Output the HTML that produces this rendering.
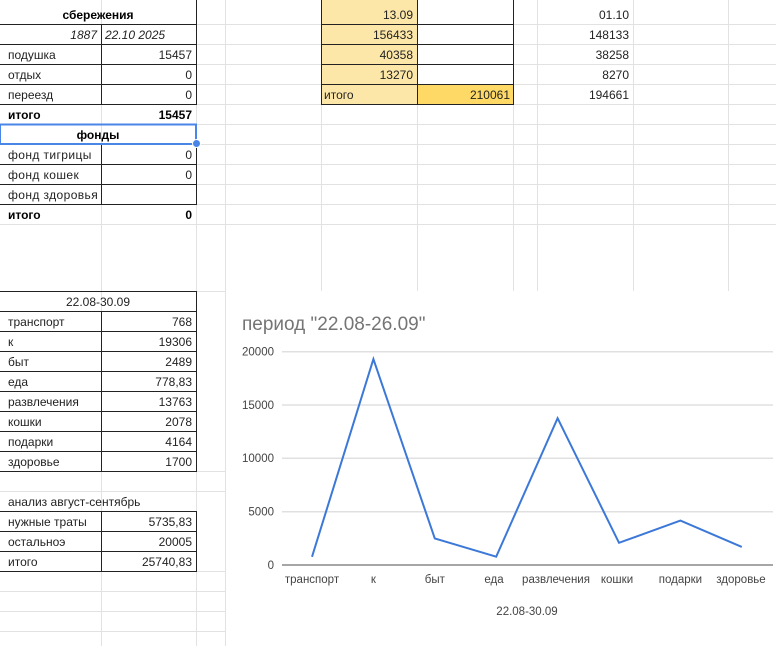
<!DOCTYPE html>
<html><head><meta charset="utf-8"><style>
html,body{margin:0;padding:0;background:#fff;width:776px;height:646px;overflow:hidden}
svg{display:block}
text{font-family:"Liberation Sans",Arial,sans-serif;font-size:12px;fill:#222}
.b{font-weight:bold;fill:#000}
.r{text-anchor:end}
.c{text-anchor:middle}
.g{stroke:#e2e2e2;stroke-width:1}
.k{stroke:#222;stroke-width:1}
.ax{font-size:11.5px;fill:#444}
</style></head><body>
<svg width="776" height="646" viewBox="0 0 776 646" xmlns="http://www.w3.org/2000/svg">
<!-- yellow fills -->
<rect x="321" y="0" width="96" height="104" fill="#fde7a8"/>
<rect x="417" y="84" width="96" height="20" fill="#ffd966"/>
<!-- light grid: verticals -->
<g class="g">
<line x1="101.5" y1="0" x2="101.5" y2="646"/>
<line x1="196.5" y1="0" x2="196.5" y2="646"/>
<line x1="225.5" y1="0" x2="225.5" y2="646"/>
<line x1="321.5" y1="0" x2="321.5" y2="291"/>
<line x1="417.5" y1="0" x2="417.5" y2="291"/>
<line x1="513.5" y1="0" x2="513.5" y2="291"/>
<line x1="537.5" y1="0" x2="537.5" y2="291"/>
<line x1="633.5" y1="0" x2="633.5" y2="291"/>
<line x1="728.5" y1="0" x2="728.5" y2="291"/>
<line x1="0" y1="24.5" x2="776" y2="24.5"/>
<line x1="0" y1="44.5" x2="776" y2="44.5"/>
<line x1="0" y1="64.5" x2="776" y2="64.5"/>
<line x1="0" y1="84.5" x2="776" y2="84.5"/>
<line x1="0" y1="104.5" x2="776" y2="104.5"/>
<line x1="0" y1="124.5" x2="776" y2="124.5"/>
<line x1="0" y1="144.5" x2="776" y2="144.5"/>
<line x1="0" y1="164.5" x2="776" y2="164.5"/>
<line x1="0" y1="184.5" x2="776" y2="184.5"/>
<line x1="0" y1="204.5" x2="776" y2="204.5"/>
<line x1="0" y1="224.5" x2="776" y2="224.5"/>
<line x1="0" y1="291.5" x2="225" y2="291.5"/>
<line x1="0" y1="471.5" x2="225" y2="471.5"/>
<line x1="0" y1="491.5" x2="225" y2="491.5"/>
<line x1="0" y1="571.5" x2="225" y2="571.5"/>
<line x1="0" y1="591.5" x2="225" y2="591.5"/>
<line x1="0" y1="611.5" x2="225" y2="611.5"/>
<line x1="0" y1="631.5" x2="225" y2="631.5"/>
</g>
<!-- black borders -->
<g class="k">
<line x1="196.5" y1="0" x2="196.5" y2="104"/>
<line x1="101.5" y1="24" x2="101.5" y2="104"/>
<line x1="0" y1="24.5" x2="197" y2="24.5"/>
<line x1="0" y1="44.5" x2="197" y2="44.5"/>
<line x1="0" y1="64.5" x2="197" y2="64.5"/>
<line x1="0" y1="84.5" x2="197" y2="84.5"/>
<line x1="0" y1="104.5" x2="197" y2="104.5"/>
<line x1="0" y1="144.5" x2="197" y2="144.5"/>
<line x1="0" y1="164.5" x2="197" y2="164.5"/>
<line x1="0" y1="184.5" x2="197" y2="184.5"/>
<line x1="0" y1="204.5" x2="197" y2="204.5"/>
<line x1="101.5" y1="144" x2="101.5" y2="204"/>
<line x1="196.5" y1="144" x2="196.5" y2="204"/>
<!-- yellow table -->
<line x1="321.5" y1="0" x2="321.5" y2="104"/>
<line x1="417.5" y1="0" x2="417.5" y2="104"/>
<line x1="513.5" y1="0" x2="513.5" y2="104"/>
<line x1="321" y1="24.5" x2="514" y2="24.5"/>
<line x1="321" y1="44.5" x2="514" y2="44.5"/>
<line x1="321" y1="64.5" x2="514" y2="64.5"/>
<line x1="321" y1="84.5" x2="514" y2="84.5"/>
<line x1="321" y1="104.5" x2="514" y2="104.5"/>
<!-- lower table -->
<line x1="0" y1="291.5" x2="197" y2="291.5"/>
<line x1="0" y1="311.5" x2="197" y2="311.5"/>
<line x1="0" y1="331.5" x2="197" y2="331.5"/>
<line x1="0" y1="351.5" x2="197" y2="351.5"/>
<line x1="0" y1="371.5" x2="197" y2="371.5"/>
<line x1="0" y1="391.5" x2="197" y2="391.5"/>
<line x1="0" y1="411.5" x2="197" y2="411.5"/>
<line x1="0" y1="431.5" x2="197" y2="431.5"/>
<line x1="0" y1="451.5" x2="197" y2="451.5"/>
<line x1="0" y1="471.5" x2="197" y2="471.5"/>
<line x1="196.5" y1="291" x2="196.5" y2="471"/>
<line x1="101.5" y1="311" x2="101.5" y2="471"/>
<line x1="0" y1="511.5" x2="197" y2="511.5"/>
<line x1="0" y1="531.5" x2="197" y2="531.5"/>
<line x1="0" y1="551.5" x2="197" y2="551.5"/>
<line x1="0" y1="571.5" x2="197" y2="571.5"/>
<line x1="196.5" y1="511" x2="196.5" y2="571"/>
<line x1="101.5" y1="511" x2="101.5" y2="571"/>
</g>
<!-- selection -->
<rect x="0" y="124.5" width="196" height="19.5" fill="none" stroke="#4a86e8" stroke-width="2"/>
<circle cx="196.5" cy="143.5" r="4" fill="#4a86e8" stroke="#fff" stroke-width="1"/>

<!-- top-left text -->
<text x="98" y="19" class="b c">сбережения</text>
<text x="97" y="39" class="r" font-style="italic" fill="#444">1887</text>
<text x="105" y="39" font-style="italic" fill="#444">22.10 2025</text>
<text x="8" y="59">подушка</text><text x="192" y="59" class="r">15457</text>
<text x="8" y="79">отдых</text><text x="192" y="79" class="r">0</text>
<text x="8" y="99">переезд</text><text x="192" y="99" class="r">0</text>
<text x="8" y="119" class="b">итого</text><text x="192" y="119" class="r b">15457</text>
<text x="98" y="139" class="b c">фонды</text>
<text x="8" y="159" letter-spacing="0.4">фонд тигрицы</text><text x="192" y="159" class="r">0</text>
<text x="8" y="179" letter-spacing="0.4">фонд кошек</text><text x="192" y="179" class="r">0</text>
<text x="8" y="199" letter-spacing="0.4">фонд здоровья</text>
<text x="8" y="219" class="b">итого</text><text x="192" y="219" class="r b">0</text>

<!-- yellow text -->
<text x="413" y="19" class="r">13.09</text>
<text x="413" y="39" class="r">156433</text>
<text x="413" y="59" class="r">40358</text>
<text x="413" y="79" class="r">13270</text>
<text x="324" y="99">итого</text>
<text x="510" y="99" class="r">210061</text>
<text x="629" y="19" class="r">01.10</text>
<text x="629" y="39" class="r">148133</text>
<text x="629" y="59" class="r">38258</text>
<text x="629" y="79" class="r">8270</text>
<text x="629" y="99" class="r">194661</text>

<!-- lower text -->
<text x="98" y="306" class="c">22.08-30.09</text>
<text x="8" y="326">транспорт</text><text x="192" y="326" class="r">768</text>
<text x="8" y="346">к</text><text x="192" y="346" class="r">19306</text>
<text x="8" y="366">быт</text><text x="192" y="366" class="r">2489</text>
<text x="8" y="386">еда</text><text x="192" y="386" class="r">778,83</text>
<text x="8" y="406">развлечения</text><text x="192" y="406" class="r">13763</text>
<text x="8" y="426">кошки</text><text x="192" y="426" class="r">2078</text>
<text x="8" y="446">подарки</text><text x="192" y="446" class="r">4164</text>
<text x="8" y="466">здоровье</text><text x="192" y="466" class="r">1700</text>
<text x="8" y="506">анализ август-сентябрь</text>
<text x="8" y="526">нужные траты</text><text x="192" y="526" class="r">5735,83</text>
<text x="8" y="546">остальноэ</text><text x="192" y="546" class="r">20005</text>
<text x="8" y="566">итого</text><text x="192" y="566" class="r">25740,83</text>

<!-- chart -->
<rect x="226" y="291" width="550" height="355" fill="#fff"/>
<text x="242" y="330" font-size="19" style="font-size:19px;fill:#757575">период "22.08-26.09"</text>
<g stroke="#e0e0e0" stroke-width="1.5">
<line x1="282" y1="351.7" x2="773" y2="351.7"/>
<line x1="282" y1="405" x2="773" y2="405"/>
<line x1="282" y1="458.3" x2="773" y2="458.3"/>
<line x1="282" y1="511.7" x2="773" y2="511.7"/>
</g>
<line x1="282" y1="565" x2="773" y2="565" stroke="#888" stroke-width="1.5"/>
<text x="274" y="355.5" class="r ax">20000</text>
<text x="274" y="409" class="r ax">15000</text>
<text x="274" y="462" class="r ax">10000</text>
<text x="274" y="515.5" class="r ax">5000</text>
<text x="274" y="569" class="r ax">0</text>
<polyline fill="none" stroke="#3c78d8" stroke-width="2" stroke-linejoin="miter"
points="312,556.8 373.4,359.1 434.8,538.5 496.2,556.7 557.6,418.2 619,542.8 680.4,520.6 741.8,546.9"/>
<g class="ax">
<text x="312" y="583" class="c ax">транспорт</text>
<text x="373.4" y="583" class="c ax">к</text>
<text x="434.8" y="583" class="c ax">быт</text>
<text x="494" y="583" class="c ax">еда</text>
<text x="556" y="583" class="c ax">развлечения</text>
<text x="617" y="583" class="c ax">кошки</text>
<text x="680.4" y="583" class="c ax">подарки</text>
<text x="741" y="583" class="c ax">здоровье</text>
<text x="527" y="615" class="c ax">22.08-30.09</text>
</g>
</svg>
</body></html>
